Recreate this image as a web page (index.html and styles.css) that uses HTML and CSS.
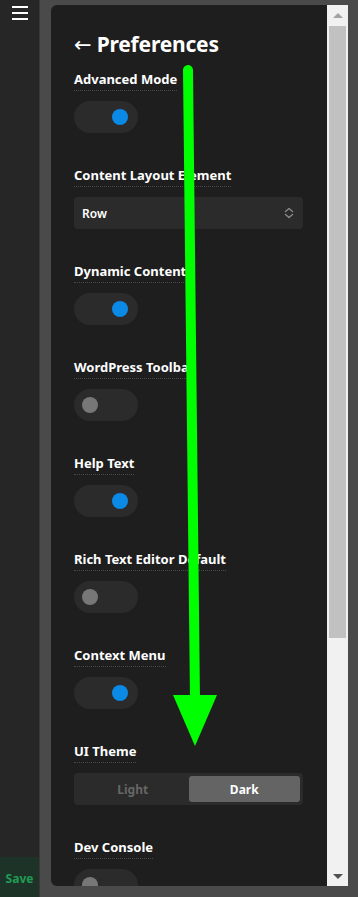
FILE: index.html
```html
<!DOCTYPE html>
<html>
<head>
<meta charset="utf-8">
<link rel="stylesheet" href="styles.css">
</head>
<body>
<div class="app">
  <aside class="sidebar">
    <div class="burger"><span></span><span></span><span></span></div>
    <div class="save">Save</div>
  </aside>
  <main class="stage">
    <div class="panel">
      <div class="content">
        <h1 class="title"><span class="back">←</span> Preferences</h1>

        <div class="field">
          <div class="label">Advanced Mode</div>
          <div class="toggle on"><span class="knob"></span></div>
        </div>
        <div class="field">
          <div class="label">Content Layout Element</div>
          <div class="select">
            <span>Row</span>
            <svg class="chev" width="10" height="12" viewBox="0 0 10 12"><path d="M1.5 4.5 5 1.5 8.5 4.5M1.5 7.5 5 10.5 8.5 7.5" fill="none" stroke="#8a8a8a" stroke-width="1.4" stroke-linecap="round" stroke-linejoin="round"/></svg>
          </div>
        </div>
        <div class="field">
          <div class="label">Dynamic Content</div>
          <div class="toggle on"><span class="knob"></span></div>
        </div>
        <div class="field">
          <div class="label">WordPress Toolbar</div>
          <div class="toggle"><span class="knob"></span></div>
        </div>
        <div class="field">
          <div class="label">Help Text</div>
          <div class="toggle on"><span class="knob"></span></div>
        </div>
        <div class="field">
          <div class="label">Rich Text Editor Default</div>
          <div class="toggle"><span class="knob"></span></div>
        </div>
        <div class="field">
          <div class="label">Context Menu</div>
          <div class="toggle on"><span class="knob"></span></div>
        </div>
        <div class="field">
          <div class="label">UI Theme</div>
          <div class="segment">
            <div class="seg">Light</div>
            <div class="seg active">Dark</div>
          </div>
        </div>
        <div class="field">
          <div class="label">Dev Console</div>
          <div class="toggle"><span class="knob"></span></div>
        </div>
      </div>
      <div class="scrollbar">
        <div class="sb-btn"><span class="tri up"></span></div>
        <div class="sb-track"><div class="sb-thumb"></div></div>
        <div class="sb-btn"><span class="tri down"></span></div>
      </div>
    </div>
  </main>
</div>
<svg class="annot" width="358" height="897" viewBox="0 0 358 897">
  <line x1="188" y1="70" x2="195" y2="700" stroke="#00ff00" stroke-width="10" stroke-linecap="round"/>
  <polygon points="173,695 217,695 195,746" fill="#00ff00"/>
</svg>
</body>
</html>
```

FILE: styles.css
```css
* { box-sizing: border-box; }
html, body { margin: 0; padding: 0; }
body {
  width: 358px;
  height: 897px;
  overflow: hidden;
  background: #4a4a4a;
  font-family: "Noto Sans", "DejaVu Sans", sans-serif;
  color: #fff;
  position: relative;
}
.app { display: flex; height: 897px; }
.sidebar {
  width: 40px;
  flex: none;
  background: #262626;
  border-right: 1px solid #383838;
  display: flex;
  flex-direction: column;
  justify-content: space-between;
}
.burger {
  display: flex;
  flex-direction: column;
  gap: 4px;
  padding: 6px 0 0 12px;
}
.burger span { display: block; width: 16px; height: 2px; background: #fff; }
.save {
  height: 40px;
  background: #1e3327;
  color: #1f9d55;
  font-size: 12px;
  font-weight: 700;
  display: flex;
  align-items: center;
  justify-content: center;
  padding-top: 2px;
}
.stage {
  flex: 1;
  padding: 5px 10px 11px 11px;
  display: flex;
}
.panel {
  flex: 1;
  display: flex;
  background: #1e1e1e;
  border-radius: 6px 0 0 6px;
  overflow: hidden;
}
.content {
  flex: 1;
  padding: 24px 24px 0 23px;
  overflow: hidden;
}
.title {
  margin: 0 0 12px;
  font-size: 21px;
  font-weight: 700;
  line-height: 30px;
  letter-spacing: -0.2px;
}
.back { font-weight: 400; }
.field {
  display: flex;
  flex-direction: column;
  align-items: flex-start;
  margin-bottom: 34px;
}
.label {
  font-size: 13px;
  font-weight: 700;
  line-height: 16px;
  padding-bottom: 3px;
  border-bottom: 1px dotted #4a4a4a;
  margin-bottom: 10px;
}
.toggle {
  width: 64px;
  height: 32px;
  border-radius: 16px;
  background: #2b2b2b;
  display: flex;
  align-items: center;
  padding: 0 8px;
}
.toggle .knob {
  width: 16px;
  height: 16px;
  border-radius: 50%;
  background: #777;
}
.toggle.on { justify-content: flex-end; padding-right: 10px; }
.toggle.on .knob { background: #0a8ae6; }
.select {
  align-self: stretch;
  height: 32px;
  border-radius: 4px;
  background: #2b2b2b;
  display: flex;
  align-items: center;
  justify-content: space-between;
  padding: 0 9px 0 8px;
  font-size: 12px;
  font-weight: 600;
}
.segment {
  align-self: stretch;
  height: 32px;
  border-radius: 4px;
  background: #2b2b2b;
  padding: 3px;
  display: flex;
}
.seg {
  flex: 1;
  display: flex;
  align-items: center;
  justify-content: center;
  font-size: 12px;
  font-weight: 700;
  color: #666;
  border-radius: 3px;
}
.seg.active { background: #646464; color: #fff; }
.scrollbar {
  width: 21px;
  flex: none;
  background: #f1f1f1;
  display: flex;
  flex-direction: column;
}
.sb-btn {
  height: 21px;
  display: flex;
  align-items: center;
  justify-content: center;
}
.sb-track { flex: 1; padding: 0 2px; }
.sb-thumb { height: 612px; background: #c1c1c1; }
.tri { width: 0; height: 0; border-left: 5px solid transparent; border-right: 5px solid transparent; }
.tri.up { border-bottom: 5px solid #a3a3a3; margin-bottom: 1px; }
.tri.down { border-top: 5px solid #505050; margin-top: 1px; }
.annot { position: absolute; left: 0; top: 0; pointer-events: none; }
```
